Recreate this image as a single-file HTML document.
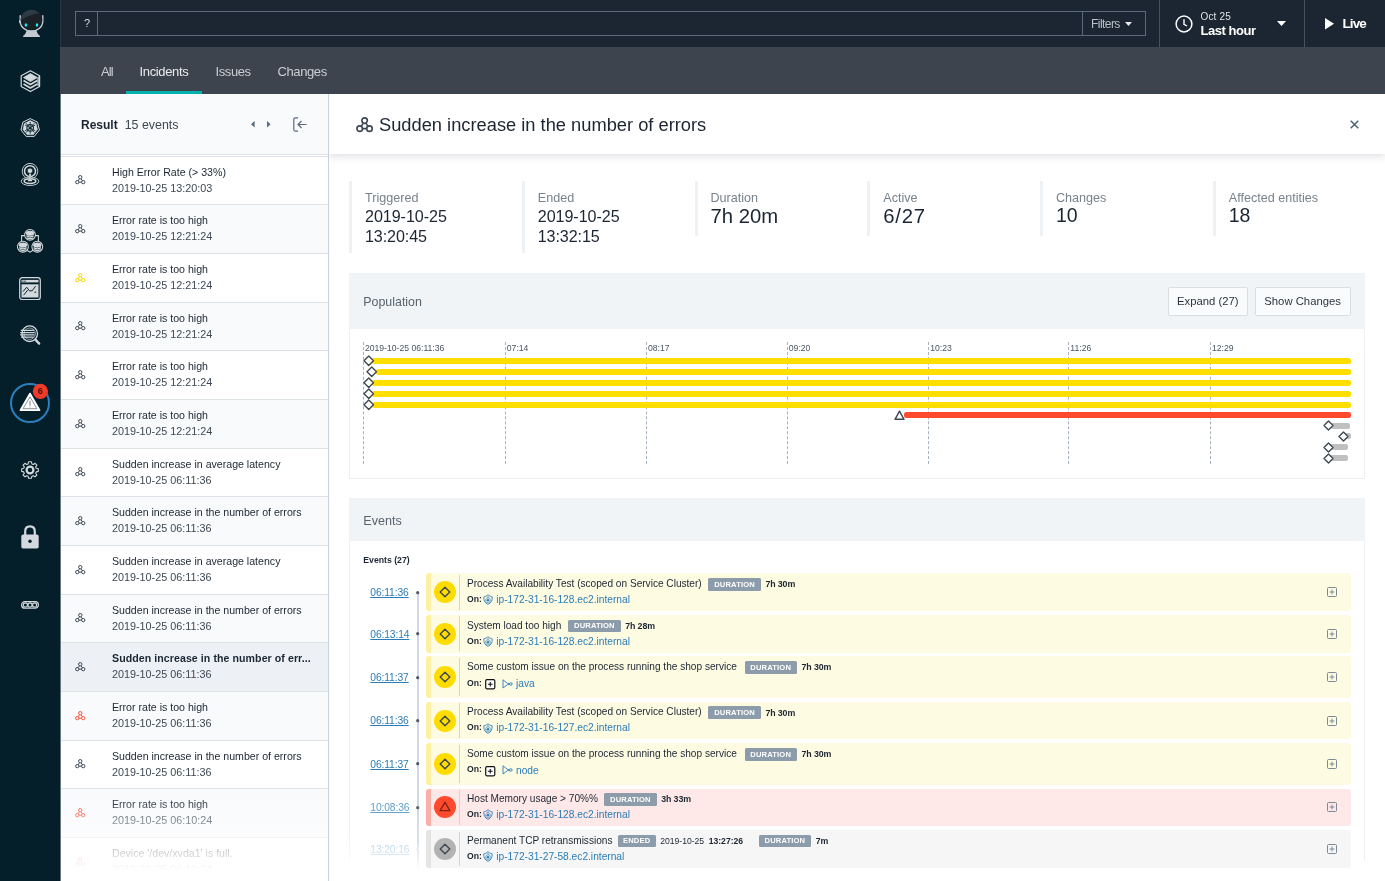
<!DOCTYPE html>
<html>
<head>
<meta charset="utf-8">
<title>Incidents</title>
<style>
*{box-sizing:border-box;margin:0;padding:0}
html,body{width:1385px;height:881px;overflow:hidden;background:#fff;font-family:"Liberation Sans",sans-serif}
.t{position:absolute;line-height:1;white-space:nowrap}
.b{position:absolute;overflow:visible}
#app{position:absolute;left:0;top:0;width:1385px;height:881px;overflow:hidden;will-change:transform}
</style>
</head>
<body>
<div id="app">
<div class="b" style="left:0.00px;top:0.00px;width:60.00px;height:881.00px;background:#041f2a;"></div>
<svg class="b" style="left:17.00px;top:8.00px;" width="28" height="30" viewBox="0 0 28 30"><defs><linearGradient id="hd" x1="0" y1="0" x2="0.6" y2="1"><stop offset="0" stop-color="#3a4750"/><stop offset="1" stop-color="#232e35"/></linearGradient><clipPath id="hc"><ellipse cx="14.5" cy="11.75" rx="10.8" ry="9.9"/></clipPath></defs><path d="M9.8 22.6 H19.3 Q20.3 26 23 28 Q23.6 29.1 22.2 29.1 H6.9 Q5.5 29.1 6.1 28 Q8.8 26 9.8 22.6 Z" fill="#c3cad0"/><path d="M3.2 7.8 V13.2 A11.3 9.9 0 0 0 25.8 13.2 V7.8" fill="none" stroke="#c3cad0" stroke-width="1.4" stroke-linecap="round"/><path d="M3 12.4 Q2 13.6 3 15" fill="none" stroke="#c3cad0" stroke-width="1.2"/><g clip-path="url(#hc)"><rect x="0" y="0" width="28" height="30" fill="#1a2126"/><path d="M0 0 H28 V4.5 Q12 6 4 12 L0 14 Z" fill="url(#hd)"/></g><ellipse cx="8.9" cy="16.9" rx="1.25" ry="1.75" fill="#19ecfb"/><ellipse cx="20" cy="16.9" rx="1.25" ry="1.75" fill="#19ecfb"/></svg>
<svg class="b" style="left:20.00px;top:69.50px;" width="21" height="22.5" viewBox="0 0 21 22.5"><g fill="none" stroke="#d3d9dd" stroke-width="1.2" stroke-linejoin="round"><path d="M10.4 0.8 L19.6 5.8 V16.4 L10.4 21.6 L1.2 16.4 V5.8 Z"/><path d="M17.6 7.6 L19.6 5.8 V16.4 L17.6 15.4 Z" fill="#d3d9dd" stroke-width="0.6" opacity="0.8"/><path d="M10.4 3.6 L17.3 7.6 L10.4 11.6 L3.5 7.6 Z" fill="#d3d9dd" stroke-width="0.8"/><path d="M3.5 10.6 L10.4 14.6 L17.3 10.6" stroke-width="1.7"/><path d="M3.5 13.9 L10.4 17.9 L17.3 13.9" stroke-width="1.7"/></g></svg>
<svg class="b" style="left:20.00px;top:117.50px;" width="20.4" height="20" viewBox="0 0 20.4 20"><g stroke-linejoin="round"><path d="M10.2 0.6 L17.5 4.1 L19.4 12 L14.3 18.4 H6.1 L1 12 L2.9 4.1 Z" fill="none" stroke="#d3d9dd" stroke-width="1"/><path d="M10.2 2.6 L16 5.4 L17.4 11.6 L13.4 16.6 H7 L3 11.6 L4.4 5.4 Z" fill="#d3d9dd" stroke="#d3d9dd" stroke-width="0.6"/><g stroke="#16303b" fill="none"><circle cx="10.2" cy="9.9" r="3.3" stroke-width="1.1"/><circle cx="10.2" cy="9.9" r="1" fill="#16303b" stroke="none"/><path d="M10.2 4 V15.8 M5.1 7 L15.3 12.8 M5.1 12.8 L15.3 7 M6 5.2 L14.4 14.6 M14.4 5.2 L6 14.6" stroke-width="0.9"/></g></g></svg>
<svg class="b" style="left:20.00px;top:162.00px;" width="20" height="25" viewBox="0 0 20 25"><g fill="none" stroke="#d3d9dd"><circle cx="10" cy="9.2" r="7.8" stroke-width="0.9"/><circle cx="10" cy="9.2" r="5.5" stroke-width="1.5"/><ellipse cx="10" cy="19.3" rx="8.8" ry="4.2" stroke-width="0.9" fill="#041f2a"/><ellipse cx="10" cy="19.1" rx="5.8" ry="2.4" stroke-width="1.5"/><path d="M10 9 V18.3" stroke-width="1.9" stroke="#041f2a" /><path d="M10 9 V18.3" stroke-width="1.8"/><circle cx="10" cy="8.8" r="2.7" fill="#d3d9dd" stroke="#041f2a" stroke-width="0.7"/><ellipse cx="10" cy="18.4" rx="2.3" ry="0.9" fill="#d3d9dd" stroke="none"/></g></svg>
<svg class="b" style="left:17.00px;top:228.50px;" width="26" height="24" viewBox="0 0 26 24"><g fill="none" stroke="#d3d9dd" stroke-width="1.05"><path d="M7.6 6.6 H4.6 V12 M18.4 6.6 H21.4 V12 M9.5 21 L13 23.2 L16.5 21"/><circle cx="13" cy="5.9" r="5.4" fill="#041f2a"/><ellipse cx="13" cy="4.300000000000001" rx="3.7" ry="2" fill="#d3d9dd"/><path d="M9.3 6.800000000000001 Q13 9.2 16.7 6.800000000000001 M9.6 8.7 Q13 10.8 16.4 8.7" stroke-width="1.3"/><circle cx="5.9" cy="17.7" r="5.4" fill="#041f2a"/><ellipse cx="5.9" cy="16.099999999999998" rx="3.7" ry="2" fill="#d3d9dd"/><path d="M2.2 18.599999999999998 Q5.9 21.0 9.600000000000001 18.599999999999998 M2.5000000000000004 20.5 Q5.9 22.6 9.3 20.5" stroke-width="1.3"/><circle cx="20.3" cy="17.7" r="5.4" fill="#041f2a"/><ellipse cx="20.3" cy="16.099999999999998" rx="3.7" ry="2" fill="#d3d9dd"/><path d="M16.6 18.599999999999998 Q20.3 21.0 24.0 18.599999999999998 M16.900000000000002 20.5 Q20.3 22.6 23.7 20.5" stroke-width="1.3"/></g></svg>
<svg class="b" style="left:19.00px;top:277.00px;" width="22" height="23.4" viewBox="0 0 22 23.4"><g fill="none" stroke="#d3d9dd" stroke-width="1.2"><rect x="0.7" y="0.7" width="20.6" height="21.8" rx="2.6"/><rect x="2.5" y="2.9" width="17" height="2.5" fill="#d3d9dd" stroke="none"/><path d="M3.3 4.15 H7.2" stroke="#041f2a" stroke-width="0.9" stroke-dasharray="1 0.5"/><rect x="2.5" y="7.3" width="17" height="13.2" fill="#d3d9dd" stroke="none"/><path d="M4 14.6 L7.7 10.2 L10.4 13.8 L13.2 13.8 L16.6 9.2 M4.6 18.2 L8.6 13.2 M15.4 15.2 H17.2" stroke="#0d2631" stroke-width="1"/></g></svg>
<svg class="b" style="left:19.00px;top:325.00px;" width="22" height="21" viewBox="0 0 22 21"><g fill="none" stroke="#d3d9dd"><circle cx="10.7" cy="8.7" r="7.8" stroke-width="1.3"/><circle cx="10.7" cy="8.7" r="5.7" stroke-width="0.7"/><path d="M16.4 14.6 L20.2 18.6" stroke-width="2.3" stroke-linecap="round"/><path d="M1.8 5.3 H14.9 M1.2 7.6 H15.6 M1.2 9.9 H15.6 M2 12.2 H14.7" stroke-width="1.3"/></g></svg>
<svg class="b" style="left:9.00px;top:382.00px;" width="42" height="42" viewBox="0 0 42 42"><circle cx="21" cy="21" r="19" fill="none" stroke="#2a7fbd" stroke-width="2"/><path d="M21 11.5 L30.6 28.2 H11.4 Z" fill="#fff" stroke="#fff" stroke-width="1.6" stroke-linejoin="round"/><path d="M21 14.8 L27.9 26.7 H14.1 Z" fill="none" stroke="#55626c" stroke-width="0.7" stroke-linejoin="round"/><path d="M21 18.8 V23.6 M21 24.6 V25.4" stroke="#444" stroke-width="0.7"/><circle cx="31.4" cy="9.3" r="7.6" fill="#f03b2a"/></svg>
<div class="t" style="left:37.70px;top:386.91px;font-size:9.2px;color:#4a120b;font-weight:700;">6</div>
<svg class="b" style="left:21.00px;top:461.00px;" width="18" height="18" viewBox="0 0 18 18"><g fill="none" stroke="#d3d9dd" stroke-width="1.1" stroke-linejoin="round"><path d="M7.6 0.8 H10.4 L10.9 2.9 L12.3 3.5 L14.1 2.3 L15.9 4.1 L14.7 5.9 L15.3 7.2 L17.3 7.7 V10.4 L15.3 10.9 L14.7 12.2 L15.9 14 L14 15.8 L12.3 14.7 L10.9 15.2 L10.4 17.3 H7.6 L7.1 15.2 L5.7 14.7 L4 15.8 L2.1 14 L3.3 12.2 L2.7 10.9 L0.7 10.4 V7.7 L2.7 7.2 L3.3 5.9 L2.1 4.1 L3.9 2.3 L5.7 3.5 L7.1 2.9 Z"/><circle cx="9" cy="9" r="3.4" stroke-width="2.2"/></g></svg>
<svg class="b" style="left:21.00px;top:525.00px;" width="18" height="24" viewBox="0 0 18 24"><path d="M4.2 10 V6.6 Q4.2 1.3 9 1.3 Q13.8 1.3 13.8 6.6 V10" fill="none" stroke="#d3d9dd" stroke-width="2.2"/><rect x="0.3" y="9.6" width="17.4" height="14" rx="1.8" fill="#d3d9dd"/><circle cx="9" cy="16.3" r="1.7" fill="#041f2a"/></svg>
<svg class="b" style="left:21.00px;top:600.50px;" width="18" height="8" viewBox="0 0 18 8"><g fill="none" stroke="#d3d9dd" stroke-width="1.2"><rect x="0.6" y="0.6" width="16.8" height="6.6" rx="3.3"/><circle cx="4.4" cy="3.9" r="2.1"/><circle cx="9" cy="3.9" r="2.1"/><circle cx="13.6" cy="3.9" r="2.1"/></g></svg>
<div class="b" style="left:60.00px;top:0.00px;width:1325.00px;height:47.00px;background:#1c2632;border-left:1px solid #2a3742;"></div>
<div class="b" style="left:75.00px;top:10.60px;width:1071.00px;height:25.20px;border:1px solid #5a697b;"></div>
<div class="b" style="left:97.00px;top:10.60px;width:1.00px;height:25.20px;background:#5a697b;"></div>
<div class="b" style="left:1082.00px;top:10.60px;width:1.00px;height:25.20px;background:#5a697b;"></div>
<div class="t" style="left:84.00px;top:18.13px;font-size:11px;color:#d9dde1;">?</div>
<div class="t" style="left:1091.00px;top:17.64px;font-size:12px;color:#b9c0c7;letter-spacing:-0.55px;">Filters</div>
<svg class="b" style="left:1125.00px;top:21.50px;" width="7" height="4" viewBox="0 0 7 4"><path d="M0 0 H7 L3.5 4 Z" fill="#e8eaec"/></svg>
<div class="b" style="left:1159.00px;top:0.00px;width:1.00px;height:47.00px;background:#46525f;"></div>
<div class="b" style="left:1304.00px;top:0.00px;width:1.00px;height:47.00px;background:#46525f;"></div>
<svg class="b" style="left:1174.50px;top:14.50px;" width="18" height="18" viewBox="0 0 18 18"><circle cx="9" cy="9" r="7.9" fill="none" stroke="#fff" stroke-width="1.5"/><path d="M9 4.3 V9.3 L12 11" fill="none" stroke="#fff" stroke-width="1.4"/></svg>
<div class="t" style="left:1200.50px;top:11.72px;font-size:10px;color:#dde1e4;letter-spacing:0.15px;">Oct 25</div>
<div class="t" style="left:1200.50px;top:24.25px;font-size:13px;color:#fff;font-weight:700;letter-spacing:-0.45px;">Last hour</div>
<svg class="b" style="left:1276.50px;top:21.00px;" width="9" height="5" viewBox="0 0 9 5"><path d="M0 0 H9 L4.5 5 Z" fill="#fff"/></svg>
<svg class="b" style="left:1325.00px;top:18.00px;" width="9" height="11.5" viewBox="0 0 9 11.5"><path d="M0 0 L9 5.75 L0 11.5 Z" fill="#fff"/></svg>
<div class="t" style="left:1342.50px;top:17.01px;font-size:13.5px;color:#fff;font-weight:700;letter-spacing:-0.9px;">Live</div>
<div class="b" style="left:60.00px;top:47.00px;width:1325.00px;height:47.00px;background:#3e444e;"></div>
<div class="t" style="left:101.00px;top:65.15px;font-size:13px;color:#c9ced3;letter-spacing:-0.9px;">All</div>
<div class="t" style="left:139.50px;top:65.15px;font-size:13px;color:#e9ebed;letter-spacing:-0.35px;">Incidents</div>
<div class="t" style="left:215.50px;top:65.15px;font-size:13px;color:#c9ced3;letter-spacing:-0.4px;">Issues</div>
<div class="t" style="left:277.50px;top:65.15px;font-size:13px;color:#c9ced3;letter-spacing:-0.4px;">Changes</div>
<div class="b" style="left:126.00px;top:91.00px;width:76.00px;height:3.00px;background:#00b1b0;"></div>
<div class="b" style="left:61.00px;top:94.00px;width:267.00px;height:787.00px;background:#fff;"></div>
<div class="b" style="left:61.00px;top:94.00px;width:267.00px;height:60.00px;background:#f9fafc;"></div>
<div class="b" style="left:61.00px;top:154.00px;width:267.00px;height:1.00px;background:#dde2e8;"></div>
<div class="b" style="left:61.00px;top:155.80px;width:267.00px;height:48.66px;background:#fff;border-top:1px solid #dde2e8;"></div>
<svg class="b" style="left:74.75px;top:175.46px" width="10.50" height="9.28" viewBox="0 0 17.2 15.2"><g fill="none" stroke="#3d4853" stroke-width="1.64"><circle cx="8.6" cy="3.6" r="2.75"/><circle cx="3.7" cy="11.7" r="2.75"/><circle cx="13.5" cy="11.7" r="2.75"/><path d="M7.3 6.1 L5.2 9.4 M9.9 6.1 L12 9.4 M6.5 11.7 H10.7"/></g></svg>
<div class="t" style="left:112.00px;top:166.82px;font-size:10.6px;color:#1c2632;">High Error Rate (&gt; 33%)</div>
<div class="t" style="left:112.00px;top:182.82px;font-size:10.8px;color:#3d4853;">2019-10-25 13:20:03</div>
<div class="b" style="left:61.00px;top:204.46px;width:267.00px;height:48.66px;background:#f9fafc;border-top:1px solid #dde2e8;"></div>
<svg class="b" style="left:74.75px;top:224.12px" width="10.50" height="9.28" viewBox="0 0 17.2 15.2"><g fill="none" stroke="#3d4853" stroke-width="1.64"><circle cx="8.6" cy="3.6" r="2.75"/><circle cx="3.7" cy="11.7" r="2.75"/><circle cx="13.5" cy="11.7" r="2.75"/><path d="M7.3 6.1 L5.2 9.4 M9.9 6.1 L12 9.4 M6.5 11.7 H10.7"/></g></svg>
<div class="t" style="left:112.00px;top:215.48px;font-size:10.6px;color:#1c2632;">Error rate is too high</div>
<div class="t" style="left:112.00px;top:231.48px;font-size:10.8px;color:#3d4853;">2019-10-25 12:21:24</div>
<div class="b" style="left:61.00px;top:253.12px;width:267.00px;height:48.66px;background:#fff;border-top:1px solid #dde2e8;"></div>
<svg class="b" style="left:74.75px;top:272.78px" width="10.50" height="9.28" viewBox="0 0 17.2 15.2"><g fill="none" stroke="#f2d500" stroke-width="1.64"><circle cx="8.6" cy="3.6" r="2.75"/><circle cx="3.7" cy="11.7" r="2.75"/><circle cx="13.5" cy="11.7" r="2.75"/><path d="M7.3 6.1 L5.2 9.4 M9.9 6.1 L12 9.4 M6.5 11.7 H10.7"/></g></svg>
<div class="t" style="left:112.00px;top:264.14px;font-size:10.6px;color:#1c2632;">Error rate is too high</div>
<div class="t" style="left:112.00px;top:280.14px;font-size:10.8px;color:#3d4853;">2019-10-25 12:21:24</div>
<div class="b" style="left:61.00px;top:301.78px;width:267.00px;height:48.66px;background:#f9fafc;border-top:1px solid #dde2e8;"></div>
<svg class="b" style="left:74.75px;top:321.44px" width="10.50" height="9.28" viewBox="0 0 17.2 15.2"><g fill="none" stroke="#3d4853" stroke-width="1.64"><circle cx="8.6" cy="3.6" r="2.75"/><circle cx="3.7" cy="11.7" r="2.75"/><circle cx="13.5" cy="11.7" r="2.75"/><path d="M7.3 6.1 L5.2 9.4 M9.9 6.1 L12 9.4 M6.5 11.7 H10.7"/></g></svg>
<div class="t" style="left:112.00px;top:312.80px;font-size:10.6px;color:#1c2632;">Error rate is too high</div>
<div class="t" style="left:112.00px;top:328.80px;font-size:10.8px;color:#3d4853;">2019-10-25 12:21:24</div>
<div class="b" style="left:61.00px;top:350.44px;width:267.00px;height:48.66px;background:#fff;border-top:1px solid #dde2e8;"></div>
<svg class="b" style="left:74.75px;top:370.10px" width="10.50" height="9.28" viewBox="0 0 17.2 15.2"><g fill="none" stroke="#3d4853" stroke-width="1.64"><circle cx="8.6" cy="3.6" r="2.75"/><circle cx="3.7" cy="11.7" r="2.75"/><circle cx="13.5" cy="11.7" r="2.75"/><path d="M7.3 6.1 L5.2 9.4 M9.9 6.1 L12 9.4 M6.5 11.7 H10.7"/></g></svg>
<div class="t" style="left:112.00px;top:361.46px;font-size:10.6px;color:#1c2632;">Error rate is too high</div>
<div class="t" style="left:112.00px;top:377.46px;font-size:10.8px;color:#3d4853;">2019-10-25 12:21:24</div>
<div class="b" style="left:61.00px;top:399.10px;width:267.00px;height:48.66px;background:#f9fafc;border-top:1px solid #dde2e8;"></div>
<svg class="b" style="left:74.75px;top:418.76px" width="10.50" height="9.28" viewBox="0 0 17.2 15.2"><g fill="none" stroke="#3d4853" stroke-width="1.64"><circle cx="8.6" cy="3.6" r="2.75"/><circle cx="3.7" cy="11.7" r="2.75"/><circle cx="13.5" cy="11.7" r="2.75"/><path d="M7.3 6.1 L5.2 9.4 M9.9 6.1 L12 9.4 M6.5 11.7 H10.7"/></g></svg>
<div class="t" style="left:112.00px;top:410.12px;font-size:10.6px;color:#1c2632;">Error rate is too high</div>
<div class="t" style="left:112.00px;top:426.12px;font-size:10.8px;color:#3d4853;">2019-10-25 12:21:24</div>
<div class="b" style="left:61.00px;top:447.76px;width:267.00px;height:48.66px;background:#fff;border-top:1px solid #dde2e8;"></div>
<svg class="b" style="left:74.75px;top:467.42px" width="10.50" height="9.28" viewBox="0 0 17.2 15.2"><g fill="none" stroke="#3d4853" stroke-width="1.64"><circle cx="8.6" cy="3.6" r="2.75"/><circle cx="3.7" cy="11.7" r="2.75"/><circle cx="13.5" cy="11.7" r="2.75"/><path d="M7.3 6.1 L5.2 9.4 M9.9 6.1 L12 9.4 M6.5 11.7 H10.7"/></g></svg>
<div class="t" style="left:112.00px;top:458.78px;font-size:10.6px;color:#1c2632;">Sudden increase in average latency</div>
<div class="t" style="left:112.00px;top:474.78px;font-size:10.8px;color:#3d4853;">2019-10-25 06:11:36</div>
<div class="b" style="left:61.00px;top:496.42px;width:267.00px;height:48.66px;background:#f9fafc;border-top:1px solid #dde2e8;"></div>
<svg class="b" style="left:74.75px;top:516.08px" width="10.50" height="9.28" viewBox="0 0 17.2 15.2"><g fill="none" stroke="#3d4853" stroke-width="1.64"><circle cx="8.6" cy="3.6" r="2.75"/><circle cx="3.7" cy="11.7" r="2.75"/><circle cx="13.5" cy="11.7" r="2.75"/><path d="M7.3 6.1 L5.2 9.4 M9.9 6.1 L12 9.4 M6.5 11.7 H10.7"/></g></svg>
<div class="t" style="left:112.00px;top:507.44px;font-size:10.6px;color:#1c2632;">Sudden increase in the number of errors</div>
<div class="t" style="left:112.00px;top:523.44px;font-size:10.8px;color:#3d4853;">2019-10-25 06:11:36</div>
<div class="b" style="left:61.00px;top:545.08px;width:267.00px;height:48.66px;background:#fff;border-top:1px solid #dde2e8;"></div>
<svg class="b" style="left:74.75px;top:564.74px" width="10.50" height="9.28" viewBox="0 0 17.2 15.2"><g fill="none" stroke="#3d4853" stroke-width="1.64"><circle cx="8.6" cy="3.6" r="2.75"/><circle cx="3.7" cy="11.7" r="2.75"/><circle cx="13.5" cy="11.7" r="2.75"/><path d="M7.3 6.1 L5.2 9.4 M9.9 6.1 L12 9.4 M6.5 11.7 H10.7"/></g></svg>
<div class="t" style="left:112.00px;top:556.10px;font-size:10.6px;color:#1c2632;">Sudden increase in average latency</div>
<div class="t" style="left:112.00px;top:572.10px;font-size:10.8px;color:#3d4853;">2019-10-25 06:11:36</div>
<div class="b" style="left:61.00px;top:593.74px;width:267.00px;height:48.66px;background:#f9fafc;border-top:1px solid #dde2e8;"></div>
<svg class="b" style="left:74.75px;top:613.40px" width="10.50" height="9.28" viewBox="0 0 17.2 15.2"><g fill="none" stroke="#3d4853" stroke-width="1.64"><circle cx="8.6" cy="3.6" r="2.75"/><circle cx="3.7" cy="11.7" r="2.75"/><circle cx="13.5" cy="11.7" r="2.75"/><path d="M7.3 6.1 L5.2 9.4 M9.9 6.1 L12 9.4 M6.5 11.7 H10.7"/></g></svg>
<div class="t" style="left:112.00px;top:604.76px;font-size:10.6px;color:#1c2632;">Sudden increase in the number of errors</div>
<div class="t" style="left:112.00px;top:620.76px;font-size:10.8px;color:#3d4853;">2019-10-25 06:11:36</div>
<div class="b" style="left:61.00px;top:642.40px;width:267.00px;height:48.66px;background:#edf1f6;border-top:1px solid #dde2e8;"></div>
<svg class="b" style="left:74.75px;top:662.06px" width="10.50" height="9.28" viewBox="0 0 17.2 15.2"><g fill="none" stroke="#3d4853" stroke-width="1.64"><circle cx="8.6" cy="3.6" r="2.75"/><circle cx="3.7" cy="11.7" r="2.75"/><circle cx="13.5" cy="11.7" r="2.75"/><path d="M7.3 6.1 L5.2 9.4 M9.9 6.1 L12 9.4 M6.5 11.7 H10.7"/></g></svg>
<div class="t" style="left:112.00px;top:653.42px;font-size:10.6px;color:#1c2632;font-weight:700;letter-spacing:0.07px;">Sudden increase in the number of err...</div>
<div class="t" style="left:112.00px;top:669.42px;font-size:10.8px;color:#3d4853;">2019-10-25 06:11:36</div>
<div class="b" style="left:61.00px;top:691.06px;width:267.00px;height:48.66px;background:#f9fafc;border-top:1px solid #dde2e8;"></div>
<svg class="b" style="left:74.75px;top:710.72px" width="10.50" height="9.28" viewBox="0 0 17.2 15.2"><g fill="none" stroke="#f0533b" stroke-width="1.64"><circle cx="8.6" cy="3.6" r="2.75"/><circle cx="3.7" cy="11.7" r="2.75"/><circle cx="13.5" cy="11.7" r="2.75"/><path d="M7.3 6.1 L5.2 9.4 M9.9 6.1 L12 9.4 M6.5 11.7 H10.7"/></g></svg>
<div class="t" style="left:112.00px;top:702.08px;font-size:10.6px;color:#1c2632;">Error rate is too high</div>
<div class="t" style="left:112.00px;top:718.08px;font-size:10.8px;color:#3d4853;">2019-10-25 06:11:36</div>
<div class="b" style="left:61.00px;top:739.72px;width:267.00px;height:48.66px;background:#fff;border-top:1px solid #dde2e8;"></div>
<svg class="b" style="left:74.75px;top:759.38px" width="10.50" height="9.28" viewBox="0 0 17.2 15.2"><g fill="none" stroke="#3d4853" stroke-width="1.64"><circle cx="8.6" cy="3.6" r="2.75"/><circle cx="3.7" cy="11.7" r="2.75"/><circle cx="13.5" cy="11.7" r="2.75"/><path d="M7.3 6.1 L5.2 9.4 M9.9 6.1 L12 9.4 M6.5 11.7 H10.7"/></g></svg>
<div class="t" style="left:112.00px;top:750.74px;font-size:10.6px;color:#1c2632;">Sudden increase in the number of errors</div>
<div class="t" style="left:112.00px;top:766.74px;font-size:10.8px;color:#3d4853;">2019-10-25 06:11:36</div>
<div class="b" style="left:61.00px;top:788.38px;width:267.00px;height:48.66px;background:#f9fafc;border-top:1px solid #dde2e8;"></div>
<svg class="b" style="left:74.75px;top:808.04px" width="10.50" height="9.28" viewBox="0 0 17.2 15.2"><g fill="none" stroke="#f0533b" stroke-width="1.64"><circle cx="8.6" cy="3.6" r="2.75"/><circle cx="3.7" cy="11.7" r="2.75"/><circle cx="13.5" cy="11.7" r="2.75"/><path d="M7.3 6.1 L5.2 9.4 M9.9 6.1 L12 9.4 M6.5 11.7 H10.7"/></g></svg>
<div class="t" style="left:112.00px;top:799.40px;font-size:10.6px;color:#1c2632;">Error rate is too high</div>
<div class="t" style="left:112.00px;top:815.40px;font-size:10.8px;color:#3d4853;">2019-10-25 06:10:24</div>
<div class="b" style="left:61.00px;top:837.04px;width:267.00px;height:48.66px;background:#fff;border-top:1px solid #dde2e8;"></div>
<svg class="b" style="left:74.75px;top:856.70px" width="10.50" height="9.28" viewBox="0 0 17.2 15.2"><g fill="none" stroke="#f0533b" stroke-width="1.64"><circle cx="8.6" cy="3.6" r="2.75"/><circle cx="3.7" cy="11.7" r="2.75"/><circle cx="13.5" cy="11.7" r="2.75"/><path d="M7.3 6.1 L5.2 9.4 M9.9 6.1 L12 9.4 M6.5 11.7 H10.7"/></g></svg>
<div class="t" style="left:112.00px;top:848.06px;font-size:10.6px;color:#1c2632;">Device '/dev/xvda1' is full.</div>
<div class="t" style="left:112.00px;top:864.06px;font-size:10.8px;color:#3d4853;">2019-10-25 06:10:24</div>
<div class="t" style="left:81.00px;top:118.94px;font-size:12px;color:#1c2632;font-weight:700;">Result</div>
<div class="t" style="left:124.70px;top:118.74px;font-size:12.4px;color:#3d4853;">15 events</div>
<svg class="b" style="left:251.00px;top:121.30px;" width="3.6" height="6.4" viewBox="0 0 3.6 6.4"><path d="M3.6 0 V6.4 L0 3.2 Z" fill="#5b6b7d"/></svg>
<svg class="b" style="left:267.30px;top:121.30px;" width="3.6" height="6.4" viewBox="0 0 3.6 6.4"><path d="M0 0 V6.4 L3.6 3.2 Z" fill="#5b6b7d"/></svg>
<svg class="b" style="left:292.50px;top:116.50px;" width="14" height="15" viewBox="0 0 14 15"><g fill="none" stroke="#5b6b7d" stroke-width="1.2"><path d="M5 0.8 H2.6 Q0.8 0.8 0.8 2.6 V12.4 Q0.8 14.2 2.6 14.2 H5"/><path d="M13.6 7.5 H5 M8.5 4 L5 7.5 L8.5 11"/></g></svg>
<div class="b" style="left:61.00px;top:795.00px;width:267.00px;height:86.00px;background:linear-gradient(to bottom,rgba(255,255,255,0) 0%,rgba(255,255,255,0.4) 33%,rgba(255,255,255,0.8) 70%,#fff 88%);"></div>
<div class="b" style="left:60.00px;top:94.00px;width:1.00px;height:787.00px;background:#69747e;"></div>
<div class="b" style="left:328.00px;top:94.00px;width:1.00px;height:787.00px;background:#c9d1da;"></div>
<div class="b" style="left:329.00px;top:94.00px;width:1056.00px;height:787.00px;background:#fff;"></div>
<div class="b" style="left:349.20px;top:181.00px;width:3.00px;height:71.50px;background:#eff2f4;"></div>
<div class="t" style="left:365.00px;top:192.24px;font-size:12.6px;color:#78828b;">Triggered</div>
<div class="t" style="left:365.00px;top:208.34px;font-size:16.1px;color:#1c2632;letter-spacing:-0.05px;">2019-10-25</div>
<div class="t" style="left:365.00px;top:227.54px;font-size:16.1px;color:#1c2632;letter-spacing:-0.1px;">13:20:45</div>
<div class="b" style="left:521.95px;top:181.00px;width:3.00px;height:71.50px;background:#eff2f4;"></div>
<div class="t" style="left:537.75px;top:192.24px;font-size:12.6px;color:#78828b;">Ended</div>
<div class="t" style="left:537.75px;top:208.34px;font-size:16.1px;color:#1c2632;letter-spacing:-0.05px;">2019-10-25</div>
<div class="t" style="left:537.75px;top:227.54px;font-size:16.1px;color:#1c2632;letter-spacing:-0.1px;">13:32:15</div>
<div class="b" style="left:694.70px;top:181.00px;width:3.00px;height:55.00px;background:#eff2f4;"></div>
<div class="t" style="left:710.50px;top:192.24px;font-size:12.6px;color:#78828b;">Duration</div>
<div class="t" style="left:710.50px;top:206.08px;font-size:20.3px;color:#1c2632;">7h 20m</div>
<div class="b" style="left:867.45px;top:181.00px;width:3.00px;height:55.00px;background:#eff2f4;"></div>
<div class="t" style="left:883.25px;top:192.24px;font-size:12.6px;color:#78828b;">Active</div>
<div class="t" style="left:883.25px;top:206.08px;font-size:20.3px;color:#1c2632;letter-spacing:0.8px;">6/27</div>
<div class="b" style="left:1040.20px;top:181.00px;width:3.00px;height:55.00px;background:#eff2f4;"></div>
<div class="t" style="left:1056.00px;top:192.24px;font-size:12.6px;color:#78828b;">Changes</div>
<div class="t" style="left:1056.00px;top:206.47px;font-size:19.5px;color:#1c2632;">10</div>
<div class="b" style="left:1212.95px;top:181.00px;width:3.00px;height:55.00px;background:#eff2f4;"></div>
<div class="t" style="left:1228.75px;top:192.24px;font-size:12.6px;color:#78828b;">Affected entities</div>
<div class="t" style="left:1228.75px;top:206.47px;font-size:19.5px;color:#1c2632;">18</div>
<div class="b" style="left:349.00px;top:273.00px;width:1016.00px;height:205.50px;background:#fff;border:1px solid #edf0f2;"></div>
<div class="b" style="left:349.00px;top:273.00px;width:1016.00px;height:55.50px;background:#f1f4f6;"></div>
<div class="t" style="left:363.30px;top:295.94px;font-size:12.4px;color:#59636d;">Population</div>
<div class="b" style="left:1167.50px;top:287.00px;width:80.00px;height:28.50px;background:#fafbfc;border:1px solid #d9dee3;border-radius:2px;"></div>
<div class="b" style="left:1255.00px;top:287.00px;width:96.00px;height:28.50px;background:#fafbfc;border:1px solid #d9dee3;border-radius:2px;"></div>
<div class="t" style="left:1177.00px;top:296.08px;font-size:11.3px;color:#2b3540;">Expand (27)</div>
<div class="t" style="left:1264.30px;top:296.08px;font-size:11.3px;color:#2b3540;">Show Changes</div>
<div class="b" style="left:362.80px;top:341.50px;width:0.00px;height:122.00px;border-left:1px dashed #a7b1bb;"></div>
<div class="t" style="left:364.90px;top:343.77px;font-size:8.65px;color:#4a5560;">2019-10-25 06:11:36</div>
<div class="b" style="left:504.70px;top:341.50px;width:0.00px;height:122.00px;border-left:1px dashed #a7b1bb;"></div>
<div class="t" style="left:506.80px;top:343.77px;font-size:8.65px;color:#4a5560;">07:14</div>
<div class="b" style="left:645.90px;top:341.50px;width:0.00px;height:122.00px;border-left:1px dashed #a7b1bb;"></div>
<div class="t" style="left:648.00px;top:343.77px;font-size:8.65px;color:#4a5560;">08:17</div>
<div class="b" style="left:786.70px;top:341.50px;width:0.00px;height:122.00px;border-left:1px dashed #a7b1bb;"></div>
<div class="t" style="left:788.80px;top:343.77px;font-size:8.65px;color:#4a5560;">09:20</div>
<div class="b" style="left:928.10px;top:341.50px;width:0.00px;height:122.00px;border-left:1px dashed #a7b1bb;"></div>
<div class="t" style="left:930.20px;top:343.77px;font-size:8.65px;color:#4a5560;">10:23</div>
<div class="b" style="left:1068.20px;top:341.50px;width:0.00px;height:122.00px;border-left:1px dashed #a7b1bb;"></div>
<div class="t" style="left:1070.30px;top:343.77px;font-size:8.65px;color:#4a5560;">11:26</div>
<div class="b" style="left:1209.80px;top:341.50px;width:0.00px;height:122.00px;border-left:1px dashed #a7b1bb;"></div>
<div class="t" style="left:1211.90px;top:343.77px;font-size:8.65px;color:#4a5560;">12:29</div>
<div class="b" style="left:372.00px;top:357.90px;width:979.00px;height:6.00px;background:#ffde00;border-radius:2.5px;"></div>
<svg class="b" style="left:362.75px;top:355.15px;" width="11.5" height="11.5" viewBox="0 0 11.5 11.5"><path d="M5.75 1.00 L10.50 5.75 L5.75 10.50 L1.00 5.75 Z" fill="#fff" stroke="#3d4853" stroke-width="1.4" stroke-linejoin="round"/></svg>
<div class="b" style="left:376.00px;top:368.80px;width:975.00px;height:6.00px;background:#ffde00;border-radius:2.5px;"></div>
<svg class="b" style="left:366.25px;top:366.05px;" width="11.5" height="11.5" viewBox="0 0 11.5 11.5"><path d="M5.75 1.00 L10.50 5.75 L5.75 10.50 L1.00 5.75 Z" fill="#fff" stroke="#3d4853" stroke-width="1.4" stroke-linejoin="round"/></svg>
<div class="b" style="left:372.00px;top:379.80px;width:979.00px;height:6.00px;background:#ffde00;border-radius:2.5px;"></div>
<svg class="b" style="left:362.75px;top:377.05px;" width="11.5" height="11.5" viewBox="0 0 11.5 11.5"><path d="M5.75 1.00 L10.50 5.75 L5.75 10.50 L1.00 5.75 Z" fill="#fff" stroke="#3d4853" stroke-width="1.4" stroke-linejoin="round"/></svg>
<div class="b" style="left:372.00px;top:390.80px;width:979.00px;height:6.00px;background:#ffde00;border-radius:2.5px;"></div>
<svg class="b" style="left:362.75px;top:388.05px;" width="11.5" height="11.5" viewBox="0 0 11.5 11.5"><path d="M5.75 1.00 L10.50 5.75 L5.75 10.50 L1.00 5.75 Z" fill="#fff" stroke="#3d4853" stroke-width="1.4" stroke-linejoin="round"/></svg>
<div class="b" style="left:372.00px;top:401.80px;width:979.00px;height:6.00px;background:#ffde00;border-radius:2.5px;"></div>
<svg class="b" style="left:362.75px;top:399.05px;" width="11.5" height="11.5" viewBox="0 0 11.5 11.5"><path d="M5.75 1.00 L10.50 5.75 L5.75 10.50 L1.00 5.75 Z" fill="#fff" stroke="#3d4853" stroke-width="1.4" stroke-linejoin="round"/></svg>
<div class="b" style="left:904.00px;top:411.80px;width:447.00px;height:6.00px;background:#ff4a2e;border-radius:2.5px;"></div>
<svg class="b" style="left:894.30px;top:409.80px;" width="11" height="10.5" viewBox="0 0 11 10.5"><path d="M5.5 1.2 L10 9.3 H1 Z" fill="#fff" stroke="#3d4853" stroke-width="1.4" stroke-linejoin="round"/></svg>
<div class="b" style="left:1330.90px;top:422.60px;width:19.40px;height:6.00px;background:#c0c0c0;border-radius:2px;"></div>
<svg class="b" style="left:1323.40px;top:420.10px;" width="11" height="11" viewBox="0 0 11 11"><path d="M5.5 1.00 L10.00 5.5 L5.5 10.00 L1.00 5.5 Z" fill="#fff" stroke="#3d4853" stroke-width="1.4" stroke-linejoin="round"/></svg>
<div class="b" style="left:1345.00px;top:433.40px;width:6.00px;height:6.00px;background:#c0c0c0;border-radius:2px;"></div>
<svg class="b" style="left:1337.50px;top:430.90px;" width="11" height="11" viewBox="0 0 11 11"><path d="M5.5 1.00 L10.00 5.5 L5.5 10.00 L1.00 5.5 Z" fill="#fff" stroke="#3d4853" stroke-width="1.4" stroke-linejoin="round"/></svg>
<div class="b" style="left:1330.30px;top:444.30px;width:17.70px;height:6.00px;background:#c0c0c0;border-radius:2px;"></div>
<svg class="b" style="left:1322.80px;top:441.80px;" width="11" height="11" viewBox="0 0 11 11"><path d="M5.5 1.00 L10.00 5.5 L5.5 10.00 L1.00 5.5 Z" fill="#fff" stroke="#3d4853" stroke-width="1.4" stroke-linejoin="round"/></svg>
<div class="b" style="left:1330.30px;top:455.20px;width:17.70px;height:6.00px;background:#c0c0c0;border-radius:2px;"></div>
<svg class="b" style="left:1322.80px;top:452.70px;" width="11" height="11" viewBox="0 0 11 11"><path d="M5.5 1.00 L10.00 5.5 L5.5 10.00 L1.00 5.5 Z" fill="#fff" stroke="#3d4853" stroke-width="1.4" stroke-linejoin="round"/></svg>
<div class="b" style="left:349.00px;top:498.00px;width:1016.00px;height:362.00px;background:#fff;border:1px solid #edf0f2;border-bottom:none;"></div>
<div class="b" style="left:349.00px;top:498.00px;width:1016.00px;height:43.00px;background:#f1f4f6;"></div>
<div class="t" style="left:363.30px;top:514.84px;font-size:12.6px;color:#59636d;">Events</div>
<div class="t" style="left:363.30px;top:555.95px;font-size:8.7px;color:#1c2632;font-weight:700;">Events (27)</div>
<div class="b" style="left:417.30px;top:592.00px;width:1.60px;height:276.00px;background:#cfd8e3;"></div>
<div class="b" style="left:426.00px;top:573.40px;width:925.00px;height:37.70px;background:#fefbe3;border-left:5.4px solid #fdefa3;border-radius:3px;"></div>
<div class="t" style="left:370.30px;top:588.12px;font-size:10.3px;color:#2b7cb6;letter-spacing:-0.12px;text-decoration:underline;text-underline-offset:1px;text-decoration-thickness:0.8px;">06:11:36</div>
<svg class="b" style="left:416.40px;top:590.65px;" width="3.4" height="3.4" viewBox="0 0 3.4 3.4"><circle cx="1.7" cy="1.7" r="1.6" fill="#4f5a64"/></svg>
<svg class="b" style="left:434.00px;top:581.25px;" width="22" height="22" viewBox="0 0 22 22"><circle cx="11" cy="11" r="11" fill="#ffdc00"/><path d="M11 6.2 L15.8 11 L11 15.8 L6.2 11 Z" fill="none" stroke="#3d4853" stroke-width="1.4" stroke-linejoin="round"/></svg>
<div class="b" style="left:459.00px;top:574.90px;width:1.00px;height:34.70px;background:#cdd6e0;"></div>
<div class="t" style="left:467.00px;top:579.07px;font-size:10.1px;color:#1c2632;">Process Availability Test (scoped on Service Cluster)</div>
<div class="b" style="left:708.40px;top:578.10px;width:52.40px;height:12.80px;background:#8c9caa;border-radius:1.5px;"></div>
<div class="t" style="left:708.40px;width:52.4px;text-align:center;top:580.85px;font-size:7.6px;font-weight:700;color:#fff;letter-spacing:0.15px">DURATION</div>
<div class="t" style="left:765.40px;top:580.20px;font-size:8.8px;color:#1c2632;font-weight:700;letter-spacing:-0.1px;">7h 30m</div>
<div class="t" style="left:467.00px;top:595.00px;font-size:8.6px;color:#1c2632;font-weight:700;">On:</div>
<svg class="b" style="left:483.00px;top:594.30px;" width="10" height="11" viewBox="0 0 10 11"><g fill="none" stroke="#2b7cb6" stroke-width="0.85"><path d="M5 0.7 C6.4 2.1 7.9 2.6 9.2 2.8 C9.5 6.4 8.1 9 5 10.4 C1.9 9 0.5 6.4 0.8 2.8 C2.1 2.6 3.6 2.1 5 0.7 Z"/><circle cx="5" cy="6.3" r="2.5" stroke-width="0.6"/><circle cx="5" cy="6.3" r="1.3" fill="#2b7cb6" stroke="none"/><path d="M5 2 V4" stroke-width="0.7"/></g></svg>
<div class="t" style="left:496.30px;top:595.02px;font-size:10.2px;color:#2b7cb6;">ip-172-31-16-128.ec2.internal</div>
<svg class="b" style="left:1327.00px;top:587.25px;" width="10" height="10" viewBox="0 0 10 10"><g fill="none" stroke="#7d8a94" stroke-width="1"><rect x="0.5" y="0.5" width="9" height="9" rx="1"/><path d="M5 2.6 V7.4 M2.6 5 H7.4"/></g></svg>
<div class="b" style="left:426.00px;top:614.90px;width:925.00px;height:37.70px;background:#fefbe3;border-left:5.4px solid #fdefa3;border-radius:3px;"></div>
<div class="t" style="left:370.30px;top:629.62px;font-size:10.3px;color:#2b7cb6;letter-spacing:-0.12px;text-decoration:underline;text-underline-offset:1px;text-decoration-thickness:0.8px;">06:13:14</div>
<svg class="b" style="left:416.40px;top:632.15px;" width="3.4" height="3.4" viewBox="0 0 3.4 3.4"><circle cx="1.7" cy="1.7" r="1.6" fill="#4f5a64"/></svg>
<svg class="b" style="left:434.00px;top:622.75px;" width="22" height="22" viewBox="0 0 22 22"><circle cx="11" cy="11" r="11" fill="#ffdc00"/><path d="M11 6.2 L15.8 11 L11 15.8 L6.2 11 Z" fill="none" stroke="#3d4853" stroke-width="1.4" stroke-linejoin="round"/></svg>
<div class="b" style="left:459.00px;top:616.40px;width:1.00px;height:34.70px;background:#cdd6e0;"></div>
<div class="t" style="left:467.00px;top:620.57px;font-size:10.1px;color:#1c2632;">System load too high</div>
<div class="b" style="left:568.20px;top:619.60px;width:52.40px;height:12.80px;background:#8c9caa;border-radius:1.5px;"></div>
<div class="t" style="left:568.20px;width:52.4px;text-align:center;top:622.35px;font-size:7.6px;font-weight:700;color:#fff;letter-spacing:0.15px">DURATION</div>
<div class="t" style="left:625.20px;top:621.70px;font-size:8.8px;color:#1c2632;font-weight:700;letter-spacing:-0.1px;">7h 28m</div>
<div class="t" style="left:467.00px;top:636.50px;font-size:8.6px;color:#1c2632;font-weight:700;">On:</div>
<svg class="b" style="left:483.00px;top:635.80px;" width="10" height="11" viewBox="0 0 10 11"><g fill="none" stroke="#2b7cb6" stroke-width="0.85"><path d="M5 0.7 C6.4 2.1 7.9 2.6 9.2 2.8 C9.5 6.4 8.1 9 5 10.4 C1.9 9 0.5 6.4 0.8 2.8 C2.1 2.6 3.6 2.1 5 0.7 Z"/><circle cx="5" cy="6.3" r="2.5" stroke-width="0.6"/><circle cx="5" cy="6.3" r="1.3" fill="#2b7cb6" stroke="none"/><path d="M5 2 V4" stroke-width="0.7"/></g></svg>
<div class="t" style="left:496.30px;top:636.52px;font-size:10.2px;color:#2b7cb6;">ip-172-31-16-128.ec2.internal</div>
<svg class="b" style="left:1327.00px;top:628.75px;" width="10" height="10" viewBox="0 0 10 10"><g fill="none" stroke="#7d8a94" stroke-width="1"><rect x="0.5" y="0.5" width="9" height="9" rx="1"/><path d="M5 2.6 V7.4 M2.6 5 H7.4"/></g></svg>
<div class="b" style="left:426.00px;top:656.40px;width:925.00px;height:41.50px;background:#fefbe3;border-left:5.4px solid #fdefa3;border-radius:3px;"></div>
<div class="t" style="left:370.30px;top:673.02px;font-size:10.3px;color:#2b7cb6;letter-spacing:-0.12px;text-decoration:underline;text-underline-offset:1px;text-decoration-thickness:0.8px;">06:11:37</div>
<svg class="b" style="left:416.40px;top:675.55px;" width="3.4" height="3.4" viewBox="0 0 3.4 3.4"><circle cx="1.7" cy="1.7" r="1.6" fill="#4f5a64"/></svg>
<svg class="b" style="left:434.00px;top:666.15px;" width="22" height="22" viewBox="0 0 22 22"><circle cx="11" cy="11" r="11" fill="#ffdc00"/><path d="M11 6.2 L15.8 11 L11 15.8 L6.2 11 Z" fill="none" stroke="#3d4853" stroke-width="1.4" stroke-linejoin="round"/></svg>
<div class="b" style="left:459.00px;top:657.90px;width:1.00px;height:38.50px;background:#cdd6e0;"></div>
<div class="t" style="left:467.00px;top:662.07px;font-size:10.1px;color:#1c2632;">Some custom issue on the process running the shop service</div>
<div class="b" style="left:744.50px;top:661.10px;width:52.40px;height:12.80px;background:#8c9caa;border-radius:1.5px;"></div>
<div class="t" style="left:744.50px;width:52.4px;text-align:center;top:663.85px;font-size:7.6px;font-weight:700;color:#fff;letter-spacing:0.15px">DURATION</div>
<div class="t" style="left:801.50px;top:663.20px;font-size:8.8px;color:#1c2632;font-weight:700;letter-spacing:-0.1px;">7h 30m</div>
<div class="t" style="left:467.00px;top:678.60px;font-size:8.6px;color:#1c2632;font-weight:700;">On:</div>
<svg class="b" style="left:484.50px;top:679.20px;" width="10.5" height="10.5" viewBox="0 0 10.5 10.5"><rect x="0.7" y="0.7" width="9.1" height="9.1" rx="1.2" fill="#fff" stroke="#111" stroke-width="1.2"/><path d="M5.25 2.9 V7.6 M2.9 5.25 H7.6" stroke="#111" stroke-width="1.1"/></svg>
<svg class="b" style="left:501.50px;top:678.50px;" width="11" height="10" viewBox="0 0 11 10"><g fill="none" stroke="#2b7cb6" stroke-width="0.9"><path d="M1 0.8 V9 L5.5 5.6 H7.5 M1 0.8 L5.5 4.4 H7.5"/><circle cx="8.8" cy="5" r="1.3"/></g></svg>
<div class="t" style="left:516.00px;top:678.72px;font-size:10.2px;color:#2b7cb6;">java</div>
<svg class="b" style="left:1327.00px;top:672.15px;" width="10" height="10" viewBox="0 0 10 10"><g fill="none" stroke="#7d8a94" stroke-width="1"><rect x="0.5" y="0.5" width="9" height="9" rx="1"/><path d="M5 2.6 V7.4 M2.6 5 H7.4"/></g></svg>
<div class="b" style="left:426.00px;top:701.70px;width:925.00px;height:37.70px;background:#fefbe3;border-left:5.4px solid #fdefa3;border-radius:3px;"></div>
<div class="t" style="left:370.30px;top:716.42px;font-size:10.3px;color:#2b7cb6;letter-spacing:-0.12px;text-decoration:underline;text-underline-offset:1px;text-decoration-thickness:0.8px;">06:11:36</div>
<svg class="b" style="left:416.40px;top:718.95px;" width="3.4" height="3.4" viewBox="0 0 3.4 3.4"><circle cx="1.7" cy="1.7" r="1.6" fill="#4f5a64"/></svg>
<svg class="b" style="left:434.00px;top:709.55px;" width="22" height="22" viewBox="0 0 22 22"><circle cx="11" cy="11" r="11" fill="#ffdc00"/><path d="M11 6.2 L15.8 11 L11 15.8 L6.2 11 Z" fill="none" stroke="#3d4853" stroke-width="1.4" stroke-linejoin="round"/></svg>
<div class="b" style="left:459.00px;top:703.20px;width:1.00px;height:34.70px;background:#cdd6e0;"></div>
<div class="t" style="left:467.00px;top:707.37px;font-size:10.1px;color:#1c2632;">Process Availability Test (scoped on Service Cluster)</div>
<div class="b" style="left:708.40px;top:706.40px;width:52.40px;height:12.80px;background:#8c9caa;border-radius:1.5px;"></div>
<div class="t" style="left:708.40px;width:52.4px;text-align:center;top:709.15px;font-size:7.6px;font-weight:700;color:#fff;letter-spacing:0.15px">DURATION</div>
<div class="t" style="left:765.40px;top:708.50px;font-size:8.8px;color:#1c2632;font-weight:700;letter-spacing:-0.1px;">7h 30m</div>
<div class="t" style="left:467.00px;top:723.30px;font-size:8.6px;color:#1c2632;font-weight:700;">On:</div>
<svg class="b" style="left:483.00px;top:722.60px;" width="10" height="11" viewBox="0 0 10 11"><g fill="none" stroke="#2b7cb6" stroke-width="0.85"><path d="M5 0.7 C6.4 2.1 7.9 2.6 9.2 2.8 C9.5 6.4 8.1 9 5 10.4 C1.9 9 0.5 6.4 0.8 2.8 C2.1 2.6 3.6 2.1 5 0.7 Z"/><circle cx="5" cy="6.3" r="2.5" stroke-width="0.6"/><circle cx="5" cy="6.3" r="1.3" fill="#2b7cb6" stroke="none"/><path d="M5 2 V4" stroke-width="0.7"/></g></svg>
<div class="t" style="left:496.30px;top:723.32px;font-size:10.2px;color:#2b7cb6;">ip-172-31-16-127.ec2.internal</div>
<svg class="b" style="left:1327.00px;top:715.55px;" width="10" height="10" viewBox="0 0 10 10"><g fill="none" stroke="#7d8a94" stroke-width="1"><rect x="0.5" y="0.5" width="9" height="9" rx="1"/><path d="M5 2.6 V7.4 M2.6 5 H7.4"/></g></svg>
<div class="b" style="left:426.00px;top:743.20px;width:925.00px;height:41.50px;background:#fefbe3;border-left:5.4px solid #fdefa3;border-radius:3px;"></div>
<div class="t" style="left:370.30px;top:759.82px;font-size:10.3px;color:#2b7cb6;letter-spacing:-0.12px;text-decoration:underline;text-underline-offset:1px;text-decoration-thickness:0.8px;">06:11:37</div>
<svg class="b" style="left:416.40px;top:762.35px;" width="3.4" height="3.4" viewBox="0 0 3.4 3.4"><circle cx="1.7" cy="1.7" r="1.6" fill="#4f5a64"/></svg>
<svg class="b" style="left:434.00px;top:752.95px;" width="22" height="22" viewBox="0 0 22 22"><circle cx="11" cy="11" r="11" fill="#ffdc00"/><path d="M11 6.2 L15.8 11 L11 15.8 L6.2 11 Z" fill="none" stroke="#3d4853" stroke-width="1.4" stroke-linejoin="round"/></svg>
<div class="b" style="left:459.00px;top:744.70px;width:1.00px;height:38.50px;background:#cdd6e0;"></div>
<div class="t" style="left:467.00px;top:748.87px;font-size:10.1px;color:#1c2632;">Some custom issue on the process running the shop service</div>
<div class="b" style="left:744.50px;top:747.90px;width:52.40px;height:12.80px;background:#8c9caa;border-radius:1.5px;"></div>
<div class="t" style="left:744.50px;width:52.4px;text-align:center;top:750.65px;font-size:7.6px;font-weight:700;color:#fff;letter-spacing:0.15px">DURATION</div>
<div class="t" style="left:801.50px;top:750.00px;font-size:8.8px;color:#1c2632;font-weight:700;letter-spacing:-0.1px;">7h 30m</div>
<div class="t" style="left:467.00px;top:765.40px;font-size:8.6px;color:#1c2632;font-weight:700;">On:</div>
<svg class="b" style="left:484.50px;top:766.00px;" width="10.5" height="10.5" viewBox="0 0 10.5 10.5"><rect x="0.7" y="0.7" width="9.1" height="9.1" rx="1.2" fill="#fff" stroke="#111" stroke-width="1.2"/><path d="M5.25 2.9 V7.6 M2.9 5.25 H7.6" stroke="#111" stroke-width="1.1"/></svg>
<svg class="b" style="left:501.50px;top:765.30px;" width="11" height="10" viewBox="0 0 11 10"><g fill="none" stroke="#2b7cb6" stroke-width="0.9"><path d="M1 0.8 V9 L5.5 5.6 H7.5 M1 0.8 L5.5 4.4 H7.5"/><circle cx="8.8" cy="5" r="1.3"/></g></svg>
<div class="t" style="left:516.00px;top:765.52px;font-size:10.2px;color:#2b7cb6;">node</div>
<svg class="b" style="left:1327.00px;top:758.95px;" width="10" height="10" viewBox="0 0 10 10"><g fill="none" stroke="#7d8a94" stroke-width="1"><rect x="0.5" y="0.5" width="9" height="9" rx="1"/><path d="M5 2.6 V7.4 M2.6 5 H7.4"/></g></svg>
<div class="b" style="left:426.00px;top:788.50px;width:925.00px;height:37.70px;background:#fee8e8;border-left:5.4px solid #f9aea8;border-radius:3px;"></div>
<div class="t" style="left:370.30px;top:803.22px;font-size:10.3px;color:#5a9bc9;letter-spacing:-0.12px;text-decoration:underline;text-underline-offset:1px;text-decoration-thickness:0.8px;">10:08:36</div>
<svg class="b" style="left:416.40px;top:805.75px;" width="3.4" height="3.4" viewBox="0 0 3.4 3.4"><circle cx="1.7" cy="1.7" r="1.6" fill="#4f5a64"/></svg>
<svg class="b" style="left:434.00px;top:796.35px;" width="22" height="22" viewBox="0 0 22 22"><circle cx="11" cy="11" r="11" fill="#ff4a2e"/><path d="M11 6.3 L15.9 14.7 H6.1 Z" fill="none" stroke="#7a2418" stroke-width="1.3" stroke-linejoin="round"/></svg>
<div class="b" style="left:459.00px;top:790.00px;width:1.00px;height:34.70px;background:#cdd6e0;"></div>
<div class="t" style="left:467.00px;top:794.17px;font-size:10.1px;color:#1c2632;">Host Memory usage &gt; 70%%</div>
<div class="b" style="left:604.20px;top:793.20px;width:52.40px;height:12.80px;background:#8c9caa;border-radius:1.5px;"></div>
<div class="t" style="left:604.20px;width:52.4px;text-align:center;top:795.95px;font-size:7.6px;font-weight:700;color:#fff;letter-spacing:0.15px">DURATION</div>
<div class="t" style="left:661.20px;top:795.30px;font-size:8.8px;color:#1c2632;font-weight:700;letter-spacing:-0.1px;">3h 33m</div>
<div class="t" style="left:467.00px;top:810.10px;font-size:8.6px;color:#1c2632;font-weight:700;">On:</div>
<svg class="b" style="left:483.00px;top:809.40px;" width="10" height="11" viewBox="0 0 10 11"><g fill="none" stroke="#2b7cb6" stroke-width="0.85"><path d="M5 0.7 C6.4 2.1 7.9 2.6 9.2 2.8 C9.5 6.4 8.1 9 5 10.4 C1.9 9 0.5 6.4 0.8 2.8 C2.1 2.6 3.6 2.1 5 0.7 Z"/><circle cx="5" cy="6.3" r="2.5" stroke-width="0.6"/><circle cx="5" cy="6.3" r="1.3" fill="#2b7cb6" stroke="none"/><path d="M5 2 V4" stroke-width="0.7"/></g></svg>
<div class="t" style="left:496.30px;top:810.12px;font-size:10.2px;color:#2b7cb6;">ip-172-31-16-128.ec2.internal</div>
<svg class="b" style="left:1327.00px;top:802.35px;" width="10" height="10" viewBox="0 0 10 10"><g fill="none" stroke="#7d8a94" stroke-width="1"><rect x="0.5" y="0.5" width="9" height="9" rx="1"/><path d="M5 2.6 V7.4 M2.6 5 H7.4"/></g></svg>
<div class="b" style="left:426.00px;top:830.00px;width:925.00px;height:37.70px;background:#f6f6f6;border-left:5.4px solid #e4e4e4;border-radius:3px;"></div>
<div class="t" style="left:370.30px;top:844.72px;font-size:10.3px;color:#a9cbe2;letter-spacing:-0.12px;text-decoration:underline;text-underline-offset:1px;text-decoration-thickness:0.8px;">13:20:16</div>
<svg class="b" style="left:416.40px;top:847.25px;" width="3.4" height="3.4" viewBox="0 0 3.4 3.4"><circle cx="1.7" cy="1.7" r="1.6" fill="#dde3e8"/></svg>
<svg class="b" style="left:434.00px;top:837.85px;" width="22" height="22" viewBox="0 0 22 22"><circle cx="11" cy="11" r="11" fill="#b3b3b3"/><path d="M11 6.2 L15.8 11 L11 15.8 L6.2 11 Z" fill="none" stroke="#3d4853" stroke-width="1.4" stroke-linejoin="round"/></svg>
<div class="b" style="left:459.00px;top:831.50px;width:1.00px;height:34.70px;background:#cdd6e0;"></div>
<div class="t" style="left:467.00px;top:835.67px;font-size:10.1px;color:#1c2632;">Permanent TCP retransmissions</div>
<div class="b" style="left:617.70px;top:834.70px;width:38.00px;height:12.80px;background:#8c9caa;border-radius:1.5px;"></div>
<div class="t" style="left:617.70px;width:38px;text-align:center;top:837.45px;font-size:7.6px;font-weight:700;color:#fff;letter-spacing:0.15px">ENDED</div>
<div class="t" style="left:660.20px;top:836.90px;font-size:8.6px;color:#1c2632;">2019-10-25</div>
<div class="t" style="left:708.70px;top:836.90px;font-size:8.6px;color:#1c2632;font-weight:700;">13:27:26</div>
<div class="b" style="left:758.70px;top:834.70px;width:52.40px;height:12.80px;background:#8c9caa;border-radius:1.5px;"></div>
<div class="t" style="left:758.70px;width:52.4px;text-align:center;top:837.45px;font-size:7.6px;font-weight:700;color:#fff;letter-spacing:0.15px">DURATION</div>
<div class="t" style="left:815.70px;top:836.80px;font-size:8.8px;color:#1c2632;font-weight:700;letter-spacing:-0.1px;">7m</div>
<div class="t" style="left:467.00px;top:851.60px;font-size:8.6px;color:#1c2632;font-weight:700;">On:</div>
<svg class="b" style="left:483.00px;top:850.90px;" width="10" height="11" viewBox="0 0 10 11"><g fill="none" stroke="#2b7cb6" stroke-width="0.85"><path d="M5 0.7 C6.4 2.1 7.9 2.6 9.2 2.8 C9.5 6.4 8.1 9 5 10.4 C1.9 9 0.5 6.4 0.8 2.8 C2.1 2.6 3.6 2.1 5 0.7 Z"/><circle cx="5" cy="6.3" r="2.5" stroke-width="0.6"/><circle cx="5" cy="6.3" r="1.3" fill="#2b7cb6" stroke="none"/><path d="M5 2 V4" stroke-width="0.7"/></g></svg>
<div class="t" style="left:496.30px;top:851.62px;font-size:10.2px;color:#2b7cb6;">ip-172-31-27-58.ec2.internal</div>
<svg class="b" style="left:1327.00px;top:843.85px;" width="10" height="10" viewBox="0 0 10 10"><g fill="none" stroke="#7d8a94" stroke-width="1"><rect x="0.5" y="0.5" width="9" height="9" rx="1"/><path d="M5 2.6 V7.4 M2.6 5 H7.4"/></g></svg>
<div class="b" style="left:329.00px;top:800.00px;width:97.00px;height:81.00px;background:linear-gradient(to bottom,rgba(255,255,255,0) 0%,rgba(255,255,255,0.25) 55%,#fff 86%);"></div>
<div class="b" style="left:329.00px;top:868.00px;width:1056.00px;height:13.00px;background:#fff;"></div>
<div class="b" style="left:329.00px;top:94.00px;width:1056.00px;height:60.00px;background:#fff;box-shadow:0 2px 8px rgba(30,40,60,0.16);clip-path:inset(0 0 -30px 0);"></div>
<svg class="b" style="left:355.90px;top:117.00px" width="17.20" height="15.20" viewBox="0 0 17.2 15.2"><g fill="none" stroke="#3d4853" stroke-width="1.65"><circle cx="8.6" cy="3.6" r="2.75"/><circle cx="3.7" cy="11.7" r="2.75"/><circle cx="13.5" cy="11.7" r="2.75"/><path d="M7.3 6.1 L5.2 9.4 M9.9 6.1 L12 9.4 M6.5 11.7 H10.7"/></g></svg>
<div class="t" style="left:379.00px;top:115.56px;font-size:18.3px;color:#1c2632;">Sudden increase in the number of errors</div>
<svg class="b" style="left:1350.00px;top:120.00px;" width="9" height="9" viewBox="0 0 9 9"><path d="M0.7 0.7 L8.3 8.3 M8.3 0.7 L0.7 8.3" stroke="#4f6275" stroke-width="1.5" fill="none"/></svg>
</div>
</body>
</html>
